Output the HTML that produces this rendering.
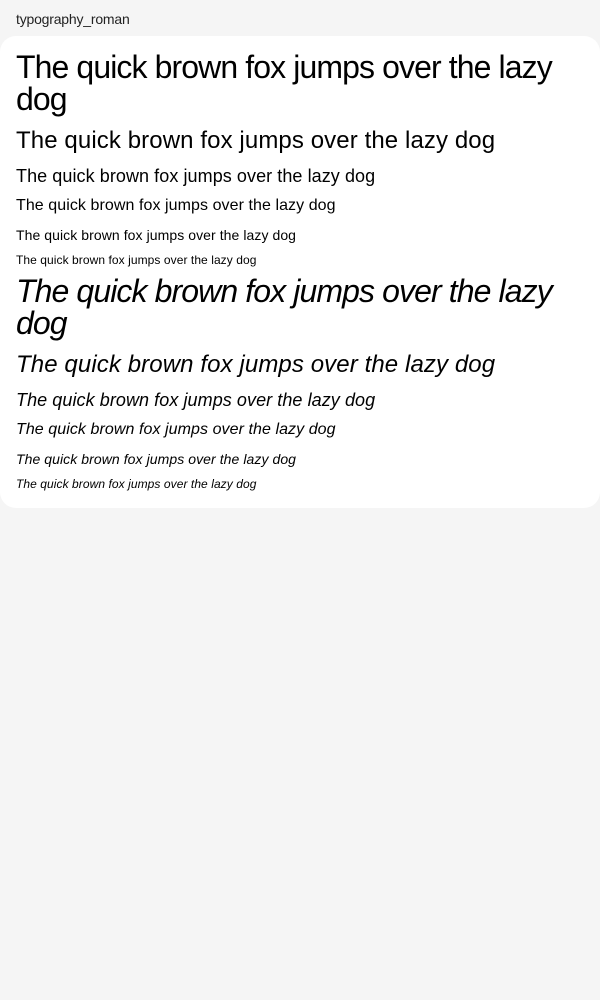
<!DOCTYPE html>
<html><head><meta charset="utf-8"><style>
html,body{margin:0;padding:0;background:#f5f5f5;width:600px;height:1000px;overflow:hidden;font-family:"Liberation Sans",Arial,sans-serif;color:#000}
.t{position:absolute;left:16px;top:12px;font-size:14px;line-height:14px;color:#222;letter-spacing:-0.2px}
.card{position:absolute;left:0;top:36px;width:600px;height:472px;background:#fff;border-radius:16px}
.l{position:absolute;left:16px;line-height:1;white-space:nowrap;letter-spacing:0.07px}
.i{font-style:italic}
.big{white-space:normal;width:580px;letter-spacing:-0.9px}
</style></head><body>
<div class="t">typography_roman</div>
<div class="card"></div>
<div class="l big" style="top:51px;font-size:32px">The quick brown fox jumps over the lazy dog</div>
<div class="l" style="top:129px;font-size:24px;letter-spacing:0.1px">The quick brown fox jumps over the lazy dog</div>
<div class="l" style="top:167px;font-size:18px">The quick brown fox jumps over the lazy dog</div>
<div class="l" style="top:198px;font-size:16px">The quick brown fox jumps over the lazy dog</div>
<div class="l" style="top:228px;font-size:14px">The quick brown fox jumps over the lazy dog</div>
<div class="l" style="top:254px;font-size:12px">The quick brown fox jumps over the lazy dog</div>
<div class="l i big" style="top:275px;font-size:32px">The quick brown fox jumps over the lazy dog</div>
<div class="l i" style="top:353px;font-size:24px;letter-spacing:0.1px">The quick brown fox jumps over the lazy dog</div>
<div class="l i" style="top:391px;font-size:18px">The quick brown fox jumps over the lazy dog</div>
<div class="l i" style="top:422px;font-size:16px">The quick brown fox jumps over the lazy dog</div>
<div class="l i" style="top:452px;font-size:14px">The quick brown fox jumps over the lazy dog</div>
<div class="l i" style="top:478px;font-size:12px">The quick brown fox jumps over the lazy dog</div>
</body></html>
